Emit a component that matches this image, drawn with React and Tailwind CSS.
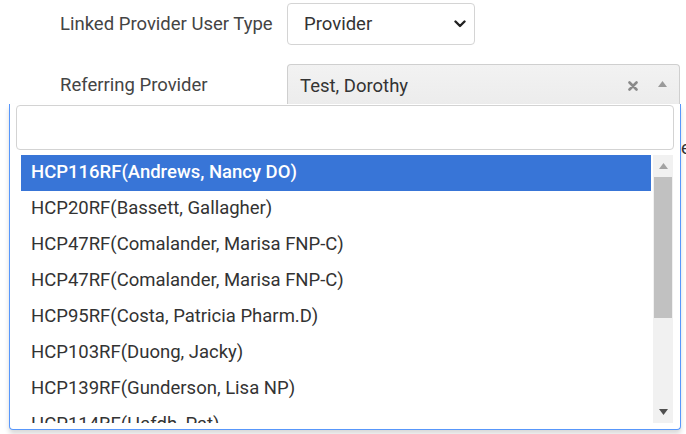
import React from "react";

const providers = [
  "HCP116RF(Andrews, Nancy DO)",
  "HCP20RF(Bassett, Gallagher)",
  "HCP47RF(Comalander, Marisa FNP-C)",
  "HCP47RF(Comalander, Marisa FNP-C)",
  "HCP95RF(Costa, Patricia Pharm.D)",
  "HCP103RF(Duong, Jacky)",
  "HCP139RF(Gunderson, Lisa NP)",
  "HCP114RF(Hafdh, Pat)",
];

function ChevronDown() {
  return (
    <svg width="12" height="8" viewBox="0 0 12 8" className="block">
      <path d="M1.5 1.5 L6 6 L10.5 1.5" fill="none" stroke="#222" strokeWidth="2.4" strokeLinecap="round" strokeLinejoin="round" />
    </svg>
  );
}

function ClearIcon() {
  return (
    <svg width="10" height="10" viewBox="0 0 10 10" className="block">
      <path d="M1.5 1.5 L8.5 8.5 M8.5 1.5 L1.5 8.5" fill="none" stroke="#8a8a8a" strokeWidth="2.6" strokeLinecap="round" />
    </svg>
  );
}

function Triangle({ up = true, color = "#999" }) {
  return (
    <svg width="9" height="6" viewBox="0 0 9 6" className="block">
      {up ? <path d="M0 6 L4.5 0 L9 6 Z" fill={color} /> : <path d="M0 0 L9 0 L4.5 6 Z" fill={color} />}
    </svg>
  );
}

export default function App() {
  return (
    <div
      className="relative w-[686px] h-[434px] overflow-hidden bg-white text-[#333]"
      style={{ fontFamily: "Roboto, 'Liberation Sans', sans-serif" }}
    >
      <div className="flex flex-col pt-[3px]">
        {/* Linked provider user type */}
        <div className="flex items-center h-[42px]">
          <div className="w-[287px] shrink-0 pl-[60px] text-[18.5px] text-[#444] leading-none">Linked Provider User Type</div>
          <div className="w-[188px] h-[42px] border border-[#d4d4d4] rounded-[4px] bg-white flex items-center justify-between pl-[16px] pr-[8px]">
            <span className="text-[18.5px] text-[#333] leading-none">Provider</span>
            <ChevronDown />
          </div>
        </div>

        {/* Referring provider */}
        <div className="flex items-center h-[42px] mt-[19px]">
          <div className="w-[287px] shrink-0 pl-[60px] text-[18.5px] text-[#444] leading-none">Referring Provider</div>
          <div className="w-[393px] h-[42px] border border-[#cfcfcf] border-b-0 rounded-t-[4px] bg-gradient-to-b from-[#f2f2f2] to-[#ececec] flex items-center pl-[12px] pr-[12px]">
            <span className="flex-1 text-[18.5px] text-[#333] leading-none pt-[1px]">Test, Dorothy</span>
            <span className="mr-[20px]"><ClearIcon /></span>
            <span className="mb-[3px]"><Triangle up color="#9a9a9a" /></span>
          </div>
        </div>

        {/* next field's label, mostly hidden under the open dropdown */}
        <div className="flex justify-end mt-[33px] h-[18px] items-center">
          <span className="text-[18.5px] leading-none text-[#333] w-[5px] overflow-hidden">e</span>
        </div>
      </div>

      {/* Open results dropdown */}
      <div className="absolute left-[9px] top-[104px] w-[672px] h-[326px] bg-white border border-t-0 border-[#5897fb] rounded-b-[4px] shadow-[0_4px_5px_rgba(0,0,0,0.15)]">
        <div className="ml-[6px] mr-[6px] mt-[1px] h-[45px] border border-[#d3d3d3] rounded-[4px] bg-white" />
        <div className="flex ml-[11px] mt-[5px] h-[268px]">
          <div className="w-[630px] h-full overflow-hidden">
            {providers.map((p, i) => (
              <div
                key={i}
                className={
                  "h-[36px] flex items-center pl-[10px] text-[18.5px] whitespace-nowrap " +
                  (i === 0 ? "bg-[#3875d7] text-white font-medium" : "text-[#333]")
                }
              >
                {p}
              </div>
            ))}
          </div>
          <div className="ml-[2px] w-[20px] h-full bg-[#f1f1f1] flex flex-col items-center">
            <div className="h-[22px] flex items-center justify-center">
              <Triangle up color="#a3a3a3" />
            </div>
            <div className="w-[18px] h-[141px] bg-[#c1c1c1]" />
            <div className="flex-1" />
            <div className="h-[22px] flex items-center justify-center">
              <Triangle up={false} color="#505050" />
            </div>
          </div>
        </div>
      </div>
    </div>
  );
}
